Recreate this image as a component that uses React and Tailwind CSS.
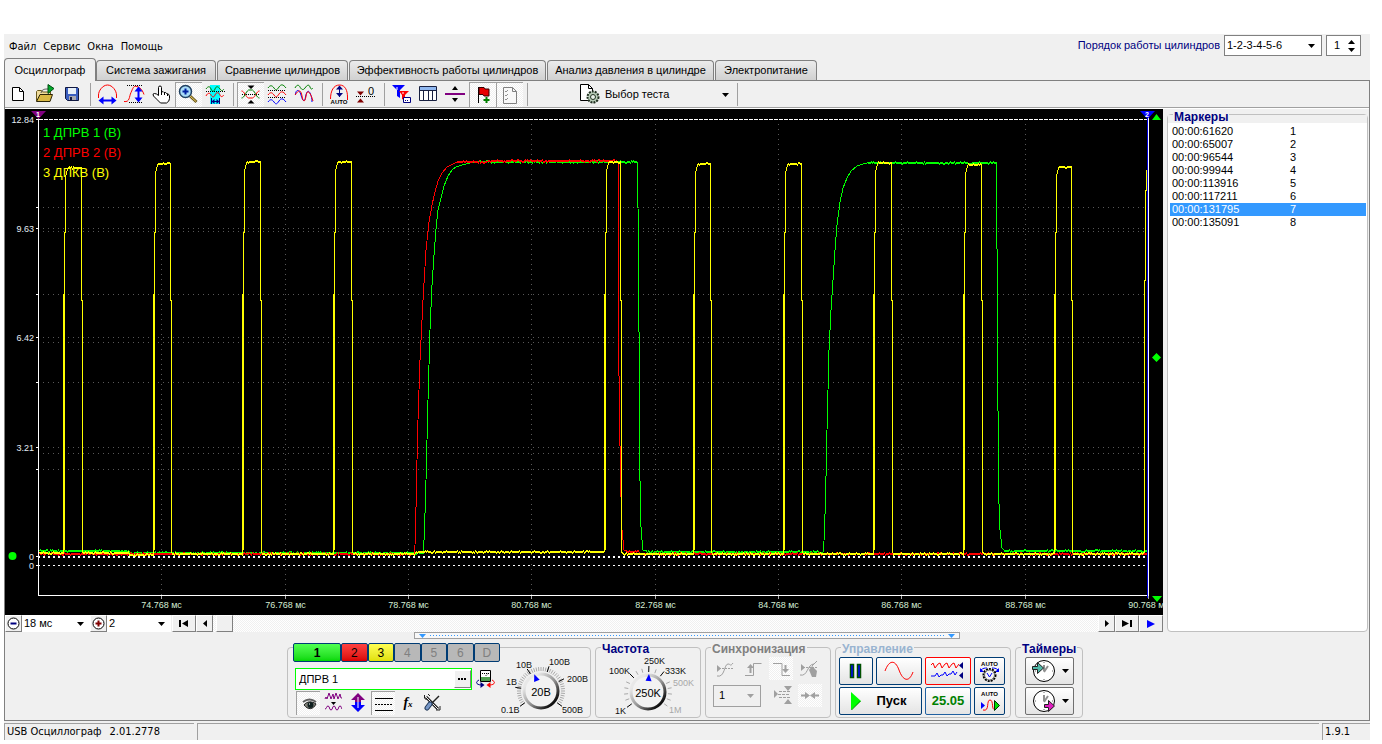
import React, { useState } from "react";

const sans = "font-['Liberation_Sans',Arial,sans-serif]";
const tahoma = "font-['DejaVu_Sans_Condensed','DejaVu_Sans',sans-serif]";
const checker =
  "bg-[repeating-conic-gradient(#ffffff_0_25%,#f0f0f0_0_50%)] bg-[length:2px_2px]";
const sunken = "border-l border-t border-[#a0a0a0] " + checker;

const tabs = [
  { name: "Осциллограф", width: "w-[92px]" },
  { name: "Система зажигания", width: "w-[120px]" },
  { name: "Сравнение цилиндров", width: "w-[131px]" },
  { name: "Эффективность работы цилиндров", width: "w-[197px]" },
  { name: "Анализ давления в цилиндре", width: "w-[167px]" },
  { name: "Электропитание", width: "w-[102px]" },
];

const markers = [
  ["00:00:61620", 1],
  ["00:00:65007", 2],
  ["00:00:96544", 3],
  ["00:00:99944", 4],
  ["00:00:113916", 5],
  ["00:00:117211", 6],
  ["00:00:131795", 7],
  ["00:00:135091", 8],
];

// ---------- toolbar icons ----------

const Icon = ({ children, w = 27, h = 25, className = "" }) => (
  <svg
    width={w}
    height={h}
    viewBox={`0 0 ${w} ${h}`}
    fill="none"
    className={"shrink-0 " + className}
    aria-hidden="true"
  >
    {children}
  </svg>
);

const NewIcon = () => (
  <Icon>
    <path d="M7.5 5.5h7l4 4v9h-11z" fill="#fff" stroke="#000" />
    <path d="M14.5 5.5v4h4" stroke="#000" />
  </Icon>
);

const OpenIcon = () => (
  <Icon>
    <path d="M4.5 19V9.500l1-1h4l1 1.500h8v3" fill="#f0dc9c" stroke="#6b5a1e" />
    <path d="M4.500 19.500l3.500-7h12.500l-2.500 7z" fill="#d9b945" stroke="#2c2508" />
    <path d="M9 11c1-4 4-4 7-4" stroke="#555" />
    <path d="M16 2.500v9l6-5z" fill="#00a82c" stroke="#004d10" />
  </Icon>
);

const SaveIcon = () => (
  <Icon>
    <path d="M6.5 5.5h12l1 1v12h-11l-2-2z" fill="#3b5fc0" stroke="#101840" />
    <path d="M9 6h8v6H9z" fill="#e8f0f8" />
    <path d="M10 14h7v4h-7z" fill="#a8a8b0" />
    <path d="M11 15h2v3h-2z" fill="#101840" />
  </Icon>
);

const HRangeIcon = () => (
  <Icon>
    <path d="M4.500 15h3V13c0-5 2-10 6-10s7 5 7 10v2h2M4.500 15c0-7 4-12 9-12s9 5 9 12" stroke="none" />
    <path d="M4.500 16V13c0-4 4-10 9-10s9 6 9 10v3" stroke="#f00" />
    <path d="M7 18.500h13" stroke="#00f" strokeWidth="2" />
    <path d="M4.500 18.500l5-4v8zM22.500 18.500l-5-4v8z" fill="#00f" />
  </Icon>
);

const VRangeIcon = () => (
  <Icon>
    <path d="M6 3.500h16M8 20.500h14" stroke="#000" strokeDasharray="1 1" />
    <path d="M3 19.500c6 1 5-5 7-9s2-7 6-6c4 1 6 5 7 8" stroke="#f00" />
    <path d="M17.500 7v11" stroke="#00f" strokeWidth="2" />
    <path d="M17.500 4.500l-4 5h8zM17.500 20.500l-4-5h8z" fill="#00f" />
  </Icon>
);

const HandIcon = () => (
  <Icon>
    <path
      d="M10.500 12V5.500q0-1.500 1.500-1.500t1.500 1.500v4.500q2-1 2.500 .5q2-.6 2.500 1q2.500 0 3 2.500v2.500q0 3-3 4.500h-6q-4-4-7-7q-1.500-2.500 1-2.500q2 0 4 2z"
      fill="#fff"
      stroke="#000"
    />
    <path d="M13.500 10v3M16.500 11v2M19.500 12v2" stroke="#000" />
  </Icon>
);

const ZoomIcon = () => (
  <Icon>
    <path d="M15 14l6.500 6" stroke="#6b5a1e" strokeWidth="3" />
    <path d="M15 14l6 5.500" stroke="#f0d060" />
    <circle cx="10.500" cy="9.500" r="6" fill="#a8dcf8" stroke="#204060" strokeWidth="1.500" />
    <path d="M7.500 9.500h6M10.500 6.500v6" stroke="#0020a0" strokeWidth="2" />
  </Icon>
);

const CursorIcon = () => (
  <Icon>
    <path d="M8 3h10v19H8z" fill="#00ffff" />
    <path d="M4 7c2-3 4-3 5 0s3 3 4 0 3-3 5 0 3 1 4 0" stroke="#008000" />
    <path d="M4 9.500h19" stroke="#000" strokeDasharray="1 1" />
    <path d="M4 14c2-4 4-3 5-1s3 3 4 0 4-3 5 0 3 1 4 0" stroke="#f00" />
    <path d="M9.500 16v6M17.500 16v6M9 19.500h9" stroke="#000080" />
    <path d="M9.500 19.500l3-2.500v5zM17.500 19.500l-3-2.500v5z" fill="#000080" />
  </Icon>
);

const CrossIcon = () => (
  <Icon>
    <path d="M10.500 3.500h7l-3.500 3.500zM10.500 21.500h7l-3.500-3.500z" fill="#000" />
    <path d="M5 12.500h18" stroke="#000" strokeDasharray="1 1" />
    <path d="M4.500 9c3 0 4 6 7 7h4c3-1 4-7 7-7" stroke="#f00" />
    <path d="M4.500 16c3 0 4-6 7-8h4c3 2 4 8 7 8" stroke="#008000" />
  </Icon>
);

const WavesIcon = () => (
  <Icon>
    <path d="M4 6c2-3 4-3 6 0s3 2 5-1 4-3 7 1" stroke="#008000" />
    <path d="M4 8.500h18M4 15.500h18" stroke="#000" strokeDasharray="1 1" />
    <path d="M4 13c2-3 4-3 6 0s3 2 5-1 4-3 7 1" stroke="#f00" />
    <path d="M4 20c2-3 4-3 6 0s3 2 5-1 4-3 7 1" stroke="#00f" />
  </Icon>
);

const OverlayIcon = () => (
  <Icon>
    <path d="M4 6c2-4 4-3 5-1s3 4 5 1 4-4 5-1 2 2 3 1" stroke="#008000" />
    <path d="M4.500 13c0-6 4-6 5.500 0s3.500 8 4.500 2 3-7 4.500-4 2 6 2 9" stroke="#00f" />
    <path d="M4 13c4-6 6-5 7 1s3 7 4 0 4-5 7 5" stroke="#f00" />
  </Icon>
);

const AutoIcon = () => (
  <Icon>
    <path d="M4.500 17c0-8 3-14 9-14s8 6 8 12v3" stroke="#f00" />
    <path d="M13.500 5v10" stroke="#000080" />
    <path d="M13.500 3.500l-3.500 4h7zM13.500 15l-3.500-4h7z" fill="#000080" />
    <text x="13" y="22" fontSize="6" fontWeight="bold" textAnchor="middle" fill="#000">
      AUTO
    </text>
  </Icon>
);

const ZeroIcon = () => (
  <Icon>
    <path d="M4 9.500h7l-3.500 4zM4 20.500h7l-3.500-4z" fill="#800000" />
    <path d="M3 14.500h20" stroke="#000" strokeDasharray="1 1" />
    <text x="15" y="13" fontSize="11" fill="#000">
      0
    </text>
  </Icon>
);

const FilterIcon = () => (
  <Icon>
    <path d="M4 3h13l-5 5v8l-3-2V8z" fill="#00f" />
    <path d="M11 9h10l-4 4v6l-3-2v-4z" fill="#f00" />
    <path d="M9 5v3M15 10v2" stroke="#fff" />
    <path d="M15.500 15.500h7v5h-7z" fill="#fff" stroke="#000080" />
    <path d="M17 18.500h4" stroke="#000080" strokeDasharray="1 1" />
  </Icon>
);

const TableIcon = () => (
  <Icon>
    <path d="M4.500 4.500h17v14h-17z" fill="#fff" stroke="#182040" />
    <path d="M5 5h16v3H5z" fill="#90b8f0" />
    <path d="M4 8.500h18M8.500 8v10M13.500 8v10M17.500 8v10" stroke="#182040" />
  </Icon>
);

const SplitIcon = () => (
  <Icon>
    <path d="M3 12h20" stroke="#800080" strokeWidth="2" />
    <path d="M10 8h6l-3-4zM10 16h6l-3 4z" fill="#000" />
  </Icon>
);

const FlagIcon = () => (
  <Icon>
    <path d="M9.500 5v16" stroke="#000" />
    <path d="M10 5.500h5l1 1.500h4v7h-5l-1-1.500h-4z" fill="#e80000" stroke="#300" />
    <path d="M17.500 15v6M14.500 18h6" stroke="#008000" strokeWidth="2" />
  </Icon>
);

const ChecklistIcon = () => (
  <Icon>
    <path d="M7.500 5.500h9l4 4v12h-13z" fill="#f8f8f8" stroke="#808080" />
    <path d="M16.500 5.500v4h4" stroke="#808080" />
    <path
      d="M9 9l1 1 2-2M9 13l1 1 2-2M9 17l1 1 2-2"
      stroke="#909090"
    />
  </Icon>
);

const TestIcon = () => (
  <Icon w={22}>
    <path d="M1.500 2.500h8l4 4v12h-12z" fill="#fff" stroke="#000" />
    <path d="M9.500 2.500v4h4" stroke="#000" />
    <circle cx="14" cy="15" r="5.500" fill="#b8ccb8" stroke="#203020" strokeWidth="2" strokeDasharray="2 1" />
    <circle cx="14" cy="15" r="2.500" fill="#e8f0e8" stroke="#203020" />
  </Icon>
);

const toolGroups = [
  [
    { label: "Новый", icon: NewIcon },
    { label: "Открыть", icon: OpenIcon },
    { label: "Сохранить", icon: SaveIcon },
  ],
  [
    { label: "Ширина", icon: HRangeIcon },
    { label: "Высота", icon: VRangeIcon },
    { label: "Рука", icon: HandIcon },
    { label: "Лупа", icon: ZoomIcon, on: true },
    { label: "Линейка", icon: CursorIcon },
  ],
  [
    { label: "Совместить", icon: CrossIcon, on: true },
    { label: "Разделить", icon: WavesIcon },
    { label: "Наложить", icon: OverlayIcon },
  ],
  [
    { label: "Авто", icon: AutoIcon },
    { label: "Ноль", icon: ZeroIcon },
  ],
  [
    { label: "Фильтр", icon: FilterIcon },
    { label: "Таблица", icon: TableIcon },
    { label: "Разделитель", icon: SplitIcon },
    { label: "Маркер", icon: FlagIcon, on: true },
    { label: "Список", icon: ChecklistIcon, on: true },
  ],
];

const Separator = () => (
  <span className="flex w-2 shrink-0 justify-center">
    <span className="my-px w-px bg-[#a0a0a0]" />
  </span>
);

const Toolbar = () => (
  <div className="flex h-[27px] border-b border-[#a0a0a0] pt-px">
    {toolGroups.map((group, i) => (
      <React.Fragment key={i}>
        {group.map(({ label, icon: Pic, on }) => (
          <button
            key={label}
            type="button"
            aria-label={label}
            className={"relative h-[25px] w-[27px] shrink-0 " + (on ? checker : "")}
          >
            <Pic />
            {on && (
              <span className="absolute inset-0 border-l border-t border-[#a0a0a0]" />
            )}
          </button>
        ))}
        <Separator />
      </React.Fragment>
    ))}
    <button
      type="button"
      className="ml-12 flex w-[154px] items-center gap-1 text-[11px] text-black"
    >
      <TestIcon />
      <span>Выбор теста</span>
      <Down className="ml-auto mr-1" />
    </button>
    <Separator />
  </div>
);

const Down = ({ className = "", color = "#000" }) => (
  <svg
    width="7"
    height="4"
    viewBox="0 0 7 4"
    className={"pointer-events-none shrink-0 " + className}
    aria-hidden="true"
  >
    <path d="M0 0h7L3.500 4z" fill={color} />
  </svg>
);

const Dropdown = ({ label, id, options, className, color, disabled }) => (
  <span className={"relative flex items-center bg-white " + className}>
    <select
      id={id}
      aria-label={label}
      disabled={disabled}
      className="h-full w-full appearance-none bg-transparent pl-[2px] leading-none outline-none"
    >
      {options.map((o) => (
        <option key={o}>{o}</option>
      ))}
    </select>
    <Down className="absolute right-[6px]" color={color} />
  </span>
);

// ---------- oscillogram ----------

const makeRandom = (seed) => () => {
  seed = (seed * 16807) % 2147483647;
  return seed / 2147483647;
};

// noisy horizontal stretch, drawn as a band about two pixels thick
const ripple = (x0, x1, y, random) => {
  const pts = [];
  const top = Math.round(y);
  for (let x = x0; x <= x1; x += 1) {
    const r = random();
    const off = r < 0.12 ? -1 : r > 0.88 ? 1 : 0;
    pts.push([x + 0.5, top + off - 0.5], [x + 0.5, top + off + 0.5]);
  }
  return pts;
};

const toPath = (pts) => "M" + pts.map(([x, y]) => `${x} ${y.toFixed(1)}`).join("L");

// rising edge, falling edge, plateau level
const pulses = [
  [63, 81, 168],
  [153, 170, 164],
  [242, 260, 162],
  [333, 351, 162],
  [604, 620, 162],
  [693, 710, 164],
  [783, 801, 164],
  [873, 891, 163],
  [963, 981, 165],
  [1054, 1071, 167],
];

const yellowTrace = () => {
  const rnd = makeRandom(77);
  const pts = [];
  let from = 39;
  const base = (a, b) => {
    if (a < 100) {
      pts.push(...ripple(a, 128, 553, rnd));
      pts.push(...ripple(129, b, 555, rnd));
    } else if (a < 400 && b > 500) {
      pts.push(...ripple(a, 414, 554, rnd), ...ripple(415, b, 552, rnd));
    } else {
      pts.push(...ripple(a, b, 554, rnd));
    }
  };
  pulses.forEach(([up, down, top], i) => {
    if (i === 0) pts.push(...ripple(from, up, 553, rnd));
    else base(from, up);
    pts.push(
      [up + 0.5, 552],
      [up + 0.5, 294],
      [up + 1.5, 294],
      [up + 1.5, 232],
      [up + 2.5, 232],
      [up + 2.5, top + 10],
      [up + 3.5, top + 4],
      [up + 5, top]
    );
    pts.push(...ripple(up + 5, down - 1, top, rnd));
    pts.push([down + 0.5, top], [down + 0.5, 293], [down + 0.5, 300], [down + 1.5, 300], [down + 1.5, 552]);
    from = down + 2;
  });
  base(from, 1143);
  pts.push([1144.5, 552], [1144.5, 280], [1145.5, 280], [1145.5, 190], [1146.5, 190], [1146.5, 170]);
  return toPath(pts);
};

const yellowEdges = () =>
  pulses
    .map(([up]) => `M${up + 1.5} 550V232M${up + 2.5} 215V188`)
    .join("");

const greenTrace = () => {
  const rnd = makeRandom(31);
  return toPath([
    ...ripple(39, 128, 551, rnd),
    ...ripple(130, 423, 553, rnd),
    [424.5, 527], [425.5, 500], [427, 440], [428, 400], [430, 330], [432, 285], [434, 255], [436, 229],
    [438, 210], [441, 198], [444, 186], [448, 176], [452, 170], [456, 167], [462, 165], [470, 163],
    ...ripple(475, 636, 162, rnd),
    [637.5, 163], [637.5, 196], [638.5, 220], [639.5, 440], [640.5, 520], [642, 540], [643, 550],
    ...ripple(646, 823, 552, rnd),
    [824.5, 530], [825.5, 500], [827, 430], [829, 350], [831, 310], [833, 280], [835, 250], [837, 225],
    [840, 202], [843, 188], [847, 178], [851, 171], [857, 166], [863, 164],
    ...ripple(868, 995, 163, rnd),
    [996.5, 163], [997.5, 330], [998.5, 490], [1000, 530], [1002, 548],
    ...ripple(1004, 1146, 551, rnd),
  ]);
};

const redTrace = () => {
  const rnd = makeRandom(59);
  return toPath([
    ...ripple(39, 414, 554, rnd),
    [415.5, 535], [416.5, 480], [418, 420], [420, 360], [423, 300], [426, 250], [429, 222], [432, 205],
    [435, 192], [438, 181], [442, 173], [447, 167], [453, 164],
    ...ripple(458, 486, 162, rnd),
    ...ripple(488, 617, 161, rnd),
    [618.5, 163], [618.5, 340], [620.5, 480], [622, 530], [624, 550],
    ...ripple(626, 638, 552, rnd),
    ...ripple(640, 1146, 554, rnd),
  ]);
};

const timeTicks = [
  [161.5, "74.768 мс"],
  [285.5, "76.768 мс"],
  [408.5, "78.768 мс"],
  [531.5, "80.768 мс"],
  [655.5, "82.768 мс"],
  [778.5, "84.768 мс"],
  [901.5, "86.768 мс"],
  [1025.5, "88.768 мс"],
  [1148.5, "90.768 мс"],
];

const levelTicks = [
  [119.5, "12.84"],
  [228.5, "9.63"],
  [337.5, "6.42"],
  [447.5, "3.21"],
  [556.5, "0"],
  [565.5, "0"],
];

const gridRows = [207.5, 228.5, 231.5, 294.5, 337.5, 342.5, 382.5, 447.5, 453.5, 469.5];

const Oscillogram = () => (
  <svg viewBox="5 109 1158 506" className="block w-full bg-black" role="img" aria-label="Осциллограмма">
    <g shapeRendering="crispEdges" fill="none">
      <g stroke="#585858" strokeDasharray="1 4">
        {gridRows.map((y) => (
          <path key={y} d={`M38 ${y}H1147`} />
        ))}
        {timeTicks.slice(0, 8).map(([x]) => (
          <path key={x} d={`M${x} 124V595`} />
        ))}
      </g>
      <path d="M39 119.500H1148" stroke="#fff" strokeDasharray="4 1" />
      <path d="M38.500 117V596M38 595.500H1148M1148.500 117V598" stroke="#fff" />
      <path d="M1147.500 117V598" stroke="#0000e0" />
      <path d="M36 119.500h3M36 228.500h3M36 337.500h3M36 447.500h3M36 556.500h3M36 565.500h3" stroke="#fff" />
      <path d="M36 207.500h3M36 294.500h3M36 382.500h3M36 469.500h3" stroke="#fff" />
      {timeTicks.map(([x]) => (
        <path key={x} d={`M${x} 596v3`} stroke="#aaa" />
      ))}
      <path d={greenTrace()} stroke="#00ff00" />
      <path d={redTrace()} stroke="#ff0000" />
      <path d={yellowTrace()} stroke="#ffff00" />
      <path d={yellowEdges()} stroke="#ffff00" />
      <path d="M38 557H1147" stroke="#fff" strokeWidth="2" strokeDasharray="2 3" />
      <path d="M38 565.500H1147" stroke="#fff" strokeDasharray="2 3" />
    </g>
    <g fontSize="9" fill="#e4ecf4" textAnchor="end">
      {levelTicks.map(([y, t]) => (
        <text key={y} x="34" y={y + 3}>
          {t}
        </text>
      ))}
    </g>
    <g fontSize="9" fill="#d4ecd4" textAnchor="middle">
      {timeTicks.map(([x, t]) => (
        <text key={x} x={x} y="608">
          {t}
        </text>
      ))}
    </g>
    <g fontSize="13">
      <text x="43" y="137" fill="#00ff00">1 ДПРВ 1 (В)</text>
      <text x="43" y="157" fill="#ff0000">2 ДПРВ 2 (В)</text>
      <text x="43" y="177" fill="#ffff00">3 ДПКВ (В)</text>
    </g>
    <path d="M31 111h15l-7.500 8z" fill="#800080" />
    <path d="M1140 111h15l-7.500 8z" fill="#0000ff" />
    <g fontSize="7" fontWeight="bold" fill="#fff" textAnchor="middle">
      <text x="38" y="117">1</text>
      <text x="1147" y="117">2</text>
    </g>
    <path d="M1152 120h9l-4.500-6zM1152 596h10l-5 6zM1156.500 353l4.500 4.500-4.500 4.500-4.500-4.500z" fill="#00ff00" />
    <circle cx="12.500" cy="556" r="4" fill="#00ff00" />
  </svg>
);

const Raised = ({ label, className = "", children }) => (
  <button
    type="button"
    aria-label={label}
    className={
      "flex shrink-0 items-center justify-center border border-b-[#808080] border-l-white border-r-[#808080] border-t-white bg-[#f0f0f0] " +
      className
    }
  >
    {children}
  </button>
);

const ScrollRow = () => (
  <div className="flex h-[17px] text-[11px]">
    <Raised label="Уменьшить" className="w-[17px]">
      <Icon w={13} h={13}>
        <circle cx="6.500" cy="6.500" r="5.500" fill="#fff" stroke="#000" />
        <path d="M3.500 6.500h6" stroke="#000080" strokeWidth="2" />
      </Icon>
    </Raised>
    <Dropdown label="Развёртка" options={["18 мс"]} className="w-[68px]" />
    <Raised label="Увеличить" className="w-[17px]">
      <Icon w={13} h={13}>
        <circle cx="6.500" cy="6.500" r="5.500" fill="#fff" stroke="#000" />
        <path d="M3.500 6.500h6M6.500 3.500v6" stroke="#800000" strokeWidth="2" />
      </Icon>
    </Raised>
    <Dropdown label="Масштаб" options={["2"]} className="w-16" />
    <Raised label="В начало" className="ml-px w-6">
      <Icon w={10} h={7}>
        <path d="M0 0h2v7H0zM9 0v7L3 3.500z" fill="#000" />
      </Icon>
    </Raised>
    <Raised label="Назад" className="w-[17px]">
      <Icon w={4} h={7}>
        <path d="M4 0v7L0 3.500z" fill="#000" />
      </Icon>
    </Raised>
    <div className={"flex flex-1 pl-[3px] " + checker}>
      <Raised label="Ползунок" className="w-[17px]" />
    </div>
    <Raised label="Вперёд" className="w-[17px]">
      <Icon w={4} h={7}>
        <path d="M0 0v7l4-3.500z" fill="#000" />
      </Icon>
    </Raised>
    <Raised label="В конец" className="w-6">
      <Icon w={10} h={7}>
        <path d="M8 0h2v7H8zM0 0v7l7-3.500z" fill="#000" />
      </Icon>
    </Raised>
    <Raised label="Воспроизвести" className="w-6">
      <Icon w={8} h={8}>
        <path d="M0 0v8l8-4z" fill="#00f" />
      </Icon>
    </Raised>
  </div>
);

const Markers = () => {
  const [selected, setSelected] = useState(7);
  return (
    <aside className="flex w-[206px] shrink-0 flex-col pl-1 pr-px pt-[5px]">
      <section className="flex-1 rounded-sm border border-[#c0c0c0] bg-white">
        <div className="flex h-2 items-end bg-[#f0f0f0] pl-[5px]">
          <h2 className="bg-[#f0f0f0] px-px text-xs font-bold leading-3 text-[#000080]">
            Маркеры
          </h2>
        </div>
        <table className="ml-[2px] mt-[2px] w-[196px] text-left text-[11px]">
          <tbody>
            {markers.map(([time, n]) => (
              <tr
                key={n}
                onClick={() => setSelected(n)}
                className={
                  "h-[13px] leading-[13px] " +
                  (n === selected ? "bg-[#3399ff] text-white" : "text-black")
                }
              >
                <td className="w-[120px] p-0 pl-[2px]">{time}</td>
                <td className="p-0">{n}</td>
              </tr>
            ))}
          </tbody>
        </table>
      </section>
    </aside>
  );
};

// ---------- control panels ----------

const Group = ({ title, color = "text-[#000080]", className = "", children }) => (
  <section className={"flex h-[71px] flex-col rounded border border-[#c0c0c0] " + className}>
    {title && (
      <h2
        className={
          "-mt-[5px] ml-[5px] self-start bg-[#f0f0f0] px-px text-xs font-bold leading-3 " + color
        }
      >
        {title}
      </h2>
    )}
    {children}
  </section>
);

const channels = [
  ["1", "w-[49px] bg-linear-to-b from-[#50ff50] to-[#00d800] font-bold text-black"],
  ["2", "w-[27px] bg-linear-to-b from-[#ff4040] to-[#d80000] text-black"],
  ["3", "w-[27px] bg-linear-to-b from-[#ffff50] to-[#e0e000] text-black"],
  ["4", "w-[27px] bg-[#b8b8b8] text-[#808080]"],
  ["5", "w-[27px] bg-[#b8b8b8] text-[#808080]"],
  ["6", "w-[27px] bg-[#b8b8b8] text-[#808080]"],
  ["D", "w-[27px] bg-[#b8b8b8] text-[#808080]"],
];

const polar = (cx, cy, r, deg) => {
  const a = (deg * Math.PI) / 180;
  return [cx + r * Math.sin(a), cy - r * Math.cos(a)];
};

const tick = (cx, cy, r0, r1, deg) => {
  const [x0, y0] = polar(cx, cy, r0, deg);
  const [x1, y1] = polar(cx, cy, r1, deg);
  return `M${x0.toFixed(1)} ${y0.toFixed(1)}L${x1.toFixed(1)} ${y1.toFixed(1)}`;
};

const Knob = ({ id, cx, cy, value, angle }) => {
  const [px, py] = polar(cx, cy, 14, angle);
  return (
    <>
      <defs>
        <linearGradient id={id} x1="0" y1="0" x2="1" y2="1">
          <stop offset="0.2" stopColor="#e8e8e8" />
          <stop offset="0.55" stopColor="#909090" />
          <stop offset="0.85" stopColor="#101010" />
        </linearGradient>
      </defs>
      <circle cx={cx} cy={cy} r="17" fill="#f2f2f2" stroke={`url(#${id})`} strokeWidth="3" />
      <path
        d="M0 -4L3 3H-3Z"
        fill="#0000ff"
        transform={`translate(${px} ${py}) rotate(${angle})`}
      />
      <text x={cx} y={cy + 5} fontSize="11" textAnchor="middle">
        {value}
      </text>
    </>
  );
};

const ticks36 = Array.from({ length: 43 }, (_, i) => -126 + i * 6);

const VoltageDial = () => (
  <svg width="89" height="68" viewBox="500 649 89 68" aria-label="20В" role="img">
    <g stroke="#a8a8a8">
      {ticks36.map((d) => (
        <path key={d} d={tick(541, 692, 20, 24, d)} />
      ))}
    </g>
    <g stroke="#000">
      {[-126, -82, -32, 18, 62, 126].map((d) => (
        <path key={d} d={tick(541, 692, 20, 26, d)} />
      ))}
    </g>
    <Knob id="knobV" cx={541} cy={692} value="20В" angle={-22} />
    <g fontSize="9" fill="#101010">
      <text x="501" y="714">0.1В</text>
      <text x="506" y="686">1В</text>
      <text x="516" y="669">10В</text>
      <text x="549" y="666">100В</text>
      <text x="567" y="683">200В</text>
      <text x="562" y="714">500В</text>
    </g>
  </svg>
);

const FrequencyDial = () => (
  <svg
    width="99"
    height="62"
    viewBox="597 655 99 62"
    className="mx-auto"
    aria-label="250K"
    role="img"
  >
    <g stroke="#a8a8a8">
      {[-110, -95, -80, -65, -30, -15, 20, 65, 80, 95, 110, 126].map((d) => (
        <path key={d} d={tick(646, 692, 20, 24, d)} />
      ))}
    </g>
    <g stroke="#000">
      {[-126, -45, 2, 38].map((d) => (
        <path key={d} d={tick(646, 692, 20, 26, d)} />
      ))}
    </g>
    <Knob id="knobF" cx={646} cy={692} value="250K" angle={3} />
    <g fontSize="9" fill="#101010">
      <text x="607" y="674">100K</text>
      <text x="642" y="664">250K</text>
      <text x="663" y="674">333K</text>
      <text x="613" y="714">1K</text>
      <g fill="#a8a8a8">
        <text x="671" y="686">500K</text>
        <text x="667" y="713">1M</text>
      </g>
    </g>
  </svg>
);

const ChannelGroup = () => (
  <Group className="w-[304px]">
    <div className="flex">
      <div className="w-[212px] pl-[5px]">
        <div className="-mt-[5px] flex bg-[#f0f0f0]">
          {channels.map(([name, look]) => (
            <button
              key={name}
              type="button"
              className={
                "h-[19px] rounded-xs border border-[#003c74] text-center text-xs leading-4 " + look
              }
            >
              {name}
            </button>
          ))}
        </div>
        <div className="mt-[6px] flex items-center gap-1 pl-[2px]">
          <div className="flex h-[22px] w-[177px] items-center border border-[#00ff00] bg-white">
            <input
              aria-label="Название канала"
              defaultValue="ДПРВ 1"
              className="min-w-0 flex-1 pl-[3px] text-[11px] outline-none"
            />
            <Raised label="Выбрать" className="h-[18px] w-[17px]">
              <Icon w={9} h={3}>
                <path d="M0 0h2v2H0zM3 0h2v2H3zM6 0h2v2H6z" fill="#000" />
              </Icon>
            </Raised>
          </div>
          <button type="button" aria-label="Инверсия">
            <Icon w={20} h={20}>
              <path d="M4.500 1.500h10v11h-10z" fill="#fff" stroke="#000" />
              <path d="M5 8h9v4H5z" fill="#50a050" />
              <path d="M6 4.500h7M9.500 7l2-2" stroke="#000" strokeDasharray="1 1" />
              <path d="M3 11c-4 2-3 5 3 5" stroke="#000080" />
              <path d="M4.500 13l4 3-4 3z" fill="#000080" />
              <path d="M16 11c4 2 3 5-3 5" stroke="#f00" />
              <path d="M14.500 13l-4 3 4 3z" fill="#f00" />
            </Icon>
          </button>
        </div>
        <div className="mt-px flex items-center pl-[3px]">
          <button type="button" aria-label="Видимость" className={"h-6 w-6 " + sunken}>
            <Icon w={23} h={23}>
              <path d="M7 13c3-4 8-4 12-1-3 6-8 6-12 1z" fill="#808078" stroke="#202020" />
              <circle cx="13.500" cy="13" r="3" fill="#102020" />
              <path d="M12 12h1" stroke="#fff" />
              <path d="M6 10c4-3 9-3 13 0" stroke="#606060" strokeWidth="2" />
            </Icon>
          </button>
          <button type="button" aria-label="Сглаживание" className="h-6 w-[27px]">
            <Icon w={27} h={24}>
              <path
                d="M5 8l1-2 1 2 2-6 2 6 2-5 1 5 2-6 2 6 2-5 1 4h1"
                stroke="#800080"
              />
              <path d="M11 11h5l-2.500 3z" fill="#000" />
              <path d="M5 18c2 0 1-3 3-3s1 4 3 4 1-4 3-4 1 4 3 4 1-4 3-4 1 3 2 3" stroke="#800080" />
            </Icon>
          </button>
          <button type="button" aria-label="Масштаб по вертикали" className="h-6 w-6">
            <Icon w={24} h={24}>
              <path d="M4 9l7-7 7 7h-4v3H8V9z" fill="#800080" />
              <path d="M4 14l7 7 7-7h-4v-3H8v3z" fill="#0000ff" />
              <path d="M11 6v11" stroke="#fff" />
            </Icon>
          </button>
          <button type="button" aria-label="Линия нуля" className={"h-6 w-6 " + sunken}>
            <Icon w={23} h={23}>
              <path d="M3 6.500h18M3 18.500h18" stroke="#000" />
              <path d="M3 12.500h18" stroke="#000" strokeDasharray="2 1" />
            </Icon>
          </button>
          <button
            type="button"
            className="h-6 w-[26px] font-['Liberation_Serif',serif] text-sm font-bold italic leading-5"
          >
            <span>f</span>
            <span className="text-[9px]">x</span>
          </button>
          <button type="button" aria-label="Настройки" className="h-6 w-6">
            <Icon w={24} h={24}>
              <path d="M5 6l12 12" stroke="#202020" strokeWidth="3" />
              <path d="M5 6l12 12" stroke="#f0f0f0" />
              <path d="M3.500 4v3l2 2M7 3l2 2M19 15v4h-4" stroke="#202020" />
              <path d="M18 5l-8 8" stroke="#202020" strokeWidth="1.500" />
              <path d="M9 13l-3 4" stroke="#203858" strokeWidth="5" strokeLinecap="round" />
              <path d="M9 13l-3 4" stroke="#7898c8" strokeWidth="3" strokeLinecap="round" />
            </Icon>
          </button>
        </div>
      </div>
      <VoltageDial />
    </div>
  </Group>
);

const SyncGroup = () => (
  <Group title="Синхронизация" color="text-[#808080]" className="w-[126px]">
    <div className="flex pl-[5px]">
      <button type="button" disabled aria-label="Синус" className="h-[29px] w-[29px]">
        <Icon w={29} h={29}>
          <path d="M6 10v7l4-3.500z" fill="#a0a0a0" />
          <path d="M8 13.500h15" stroke="#a0a0a0" strokeDasharray="2 1" />
          <path d="M6 21c8 2 7-12 11-12 3 0 2 3 5-1" stroke="#a0a0a0" />
        </Icon>
      </button>
      <button type="button" disabled aria-label="Фронт" className="h-[29px] w-[29px]">
        <Icon w={29} h={29}>
          <path d="M5 20.500h8.500V8.500h8" stroke="#a0a0a0" />
          <path d="M10.500 18v-6" stroke="#a0a0a0" strokeWidth="2" />
          <path d="M7 13h7l-3.500-4z" fill="#a0a0a0" />
        </Icon>
      </button>
      <button type="button" disabled aria-label="Спад" className={"mt-[2px] h-[23px] w-6 " + checker}>
        <Icon w={24} h={23}>
          <path d="M4 6.500h9v12h8" stroke="#a0a0a0" />
          <path d="M16.500 8v6" stroke="#a0a0a0" strokeWidth="2" />
          <path d="M13 12h7l-3.500 4z" fill="#a0a0a0" />
        </Icon>
      </button>
      <button type="button" disabled aria-label="Вручную" className="h-[29px] w-[29px]">
        <Icon w={29} h={29}>
          <path d="M8 9v7l4-3.500z" fill="#a0a0a0" />
          <path d="M10 12.500h15" stroke="#a0a0a0" strokeDasharray="2 1" />
          <path d="M7 20c8 2 7-11 14-11M19 11l5-5" stroke="#a0a0a0" />
          <path d="M16 15l3-4 5 5-1 6h-4z" fill="#a0a0a0" />
        </Icon>
      </button>
    </div>
    <div className="flex items-center pl-[7px]">
      <Dropdown
        label="Канал синхронизации"
        options={["1"]}
        color="#a0a0a0"
        className="h-[22px] w-[48px] border border-[#a0a0a0] !bg-[#f0f0f0] pl-[3px] text-[11px]"
        disabled
      />
      <button type="button" disabled aria-label="Уровень" className="ml-2 h-[23px] w-[29px]">
        <Icon w={29} h={23}>
          <path d="M5 6v8l4-4z" fill="#a0a0a0" />
          <path d="M10 7.500h11M9 10.500h12M10 13.500h11" stroke="#a0a0a0" strokeDasharray="3 1" />
          <path d="M15 2h8l-4 5zM15 20h8l-4-5z" fill="#a0a0a0" />
        </Icon>
      </button>
      <button type="button" disabled aria-label="Центр" className={"h-[23px] w-6 " + checker}>
        <Icon w={24} h={23}>
          <path d="M3 11.500h6M15 11.500h6" stroke="#a0a0a0" strokeWidth="2" />
          <path d="M7 8v7l5-3.500zM17 8v7l-5-3.500z" fill="#a0a0a0" />
        </Icon>
      </button>
    </div>
  </Group>
);

const Push = ({ label, className = "border-[#003c74]", children }) => (
  <button
    type="button"
    aria-label={label}
    className={
      "flex h-[28px] items-center justify-center rounded-xs border bg-linear-to-b from-white to-[#e4e4e4] " +
      className
    }
  >
    {children}
  </button>
);

const ControlGroup = () => (
  <Group title="Управление" color="text-[#99b4d1]" className="w-[176px]">
    <div className="mt-[2px] flex flex-col gap-[2px] pl-[3px]">
      <div className="flex gap-[3px]">
        <Push label="Пауза" className="w-[34px] border-[#003c74]">
          <Icon w={14} h={16}>
            <path d="M1.500 1.500h3v13h-3zM8.500 1.500h3v13h-3z" fill="#0000ff" stroke="#005000" strokeWidth="1.500" />
          </Icon>
        </Push>
        <Push label="Синус" className="w-[46px] border-[#003c74]">
          <Icon w={30} h={20}>
            <path d="M1 10C5-1 11-2 15 9s10 13 14 2" stroke="#f00" />
          </Icon>
        </Push>
        <Push label="Запись" className="w-[46px] border-[#ff0000]">
          <Icon w={34} h={20}>
            <path d="M0 4l2-2 2 5 3-4 2-1 2 5 3-4 2-1 2 5 3-4 2-1 2 5 3-4" stroke="#f00" />
            <path d="M0 15h4l2-3 2 4 2-2h2l2-3 2 4 2-2h2l2-3 2 4 2-3" stroke="#00f" />
            <path d="M32 1v7l-4-3.500zM32 11v7l-4-3.500z" fill="#000080" />
          </Icon>
        </Push>
        <Push label="Автонастройка" className="w-[31px] border-[#003c74]">
          <Icon w={27} h={26}>
            <text x="13.500" y="8" fontSize="6" fontWeight="bold" textAnchor="middle" fill="#000">
              AUTO
            </text>
            <path d="M5 12c2-2 4-2 6-2M22 12c-2-2-4-2-6-2" stroke="#00f" />
            <path d="M4 10v4h4zM23 10v4h-4z" fill="#00f" />
            <circle cx="13.500" cy="17" r="6" fill="#fff" stroke="#000" strokeWidth="2" strokeDasharray="2 1" />
            <circle cx="13.500" cy="17" r="5" fill="#f4f4f4" stroke="#606060" />
            <path d="M11 15l2.500 4 2.500-4" stroke="#00f" />
          </Icon>
        </Push>
      </div>
      <div className="flex gap-[3px]">
        <Push className="w-[83px] gap-4 border-[#003c74] pr-1 text-[13px] font-bold">
          <Icon w={10} h={18}>
            <path d="M0 0v18l10-9z" fill="#00ff00" />
            <path d="M.500 18l9-9" stroke="#008000" />
          </Icon>
          <span>Пуск</span>
        </Push>
        <Push className="w-[46px] border-[#2060a0] text-[13px] font-bold text-[#008000]">
          <span>25.05</span>
        </Push>
        <Push label="Автозапуск" className="w-[31px] border-[#003c74]">
          <Icon w={27} h={26}>
            <text x="13.500" y="8" fontSize="6" fontWeight="bold" textAnchor="middle" fill="#000">
              AUTO
            </text>
            <path d="M5 14v7l4-3.500z" fill="#00f" />
            <path d="M7 22c7 2 3-10 7-10s1 11 5 9" stroke="#f00" />
            <path d="M18.500 12.500v10l5-5z" fill="#00e000" stroke="#003000" />
          </Icon>
        </Push>
      </div>
    </div>
  </Group>
);

const Clock = ({ color, start }) => (
  <Icon w={26} h={24}>
    <circle cx="14" cy="12" r="10.500" fill="#fff" stroke="#000" />
    <path d="M14 12V6M14 13l4-6" stroke="#909090" strokeWidth="2" />
    <path d="M14 3v1M14 20v1M5 12h1M22 12h1" stroke="#606060" />
    <path
      d={start ? "M2.500 7.500h5v-4l6 5.500-6 5.500v-4h-5z" : "M14.500 15.500h4v-4l6 5.500-6 5.500v-4h-4z"}
      fill={color}
      stroke="#202020"
    />
  </Icon>
);

const TimersGroup = () => (
  <Group title="Таймеры" className="w-[68px]">
    <div className="mt-[2px] flex flex-col items-center gap-[2px]">
      <Push label="Таймер запуска" className="w-[49px] gap-[6px] border-[#707070]">
        <Clock color="#50b8a8" start />
        <Down />
      </Push>
      <Push label="Таймер остановки" className="w-[49px] gap-[6px] border-[#707070]">
        <Clock color="#e020c0" />
        <Down />
      </Push>
    </div>
  </Group>
);

const Splitter = () => (
  <div className="mx-auto flex h-[7px] w-[546px] items-center gap-1 border border-[#a0a0a0] bg-[#f8f8f8] px-1">
    <Down color="#3399ff" />
    <span className="h-px flex-1 bg-[repeating-linear-gradient(90deg,#3399ff_0_1px,transparent_1px_3px)]" />
    <Down color="#3399ff" />
  </div>
);

export default function App() {
  const [tab, setTab] = useState(0);
  return (
    <div className={"bg-white pt-[34px] pl-1 pr-3 text-black " + sans}>
      <div className="bg-[#f0f0f0]">
        <header className="flex h-6 items-start justify-between pl-[5px] pr-[9px] pt-px">
          <nav className={"flex gap-[7px] pt-1 text-[11px] leading-4 " + tahoma}>
            {["Файл", "Сервис", "Окна", "Помощь"].map((m) => (
              <a key={m} href="#">
                {m}
              </a>
            ))}
          </nav>
          <div className="flex items-center gap-1 text-[11px]">
            <label htmlFor="order" className="text-[#000080]">
              Порядок работы цилиндров
            </label>
            <Dropdown
              id="order"
              options={["1-2-3-4-5-6"]}
              className="h-[21px] w-[98px] border border-[#808080]"
            />
            <div className="flex h-[21px] w-[35px] items-center border border-[#808080] bg-white pr-[5px]">
              <input
                type="number"
                aria-label="Цилиндр"
                defaultValue="1"
                className="w-full min-w-0 flex-1 pl-[7px] outline-none [appearance:textfield] [&::-webkit-inner-spin-button]:appearance-none"
              />
              <Icon w={7} h={12}>
                <path d="M0 4h7L3.500 0zM0 8h7l-3.500 4z" fill="#000" />
              </Icon>
            </div>
          </div>
        </header>

        <div className="flex h-[22px] items-end" role="tablist">
          {tabs.map((t, i) => (
            <button
              key={t.name}
              type="button"
              role="tab"
              aria-selected={i === tab}
              onClick={() => setTab(i)}
              className={
                "shrink-0 whitespace-nowrap rounded-t border border-b-0 border-[#808080] text-center text-[11px] " +
                t.width +
                (i === tab
                  ? " relative -mb-px h-[23px] bg-[#f0f0f0]"
                  : " mr-px h-5 bg-linear-to-b from-[#ececec] to-[#d0d0d0]")
              }
            >
              {t.name}
            </button>
          ))}
        </div>

        <main className="border border-[#808080] pb-[2px]">
          <Toolbar />
          <div className="flex border-t border-white">
            <div className="min-w-0 flex-1">
              <Oscillogram />
              <ScrollRow />
            </div>
            <Markers />
          </div>
          <Splitter />
          <div className="mt-2 flex justify-center gap-1 pr-1">
            <ChannelGroup />
            <Group title="Частота" className="w-[106px]">
              <FrequencyDial />
            </Group>
            <SyncGroup />
            <ControlGroup />
            <TimersGroup />
          </div>
        </main>

        <footer className={"mt-[2px] flex h-[17px] gap-[3px] text-[11px] leading-4 " + tahoma}>
          <div className="flex w-[190px] gap-2 border-l border-t border-[#a0a0a0] pl-[2px]">
            <span>USB Осциллограф</span>
            <span>2.01.2778</span>
          </div>
          <div className="flex-1 border-l border-t border-[#a0a0a0]" />
          <div className="w-12 border-l border-t border-[#a0a0a0] pl-[2px]">1.9.1</div>
        </footer>
      </div>
    </div>
  );
}
